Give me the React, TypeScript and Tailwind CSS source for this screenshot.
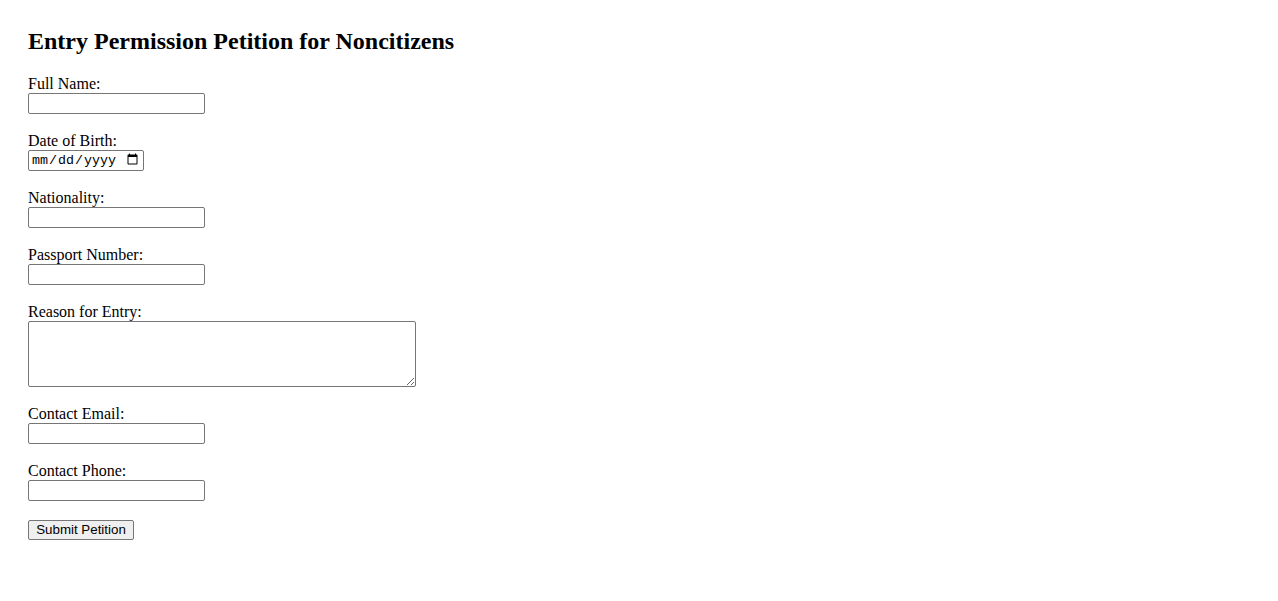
const FIELDS = [
  { id: 'fullName', label: 'Full Name:', type: 'text' },
  { id: 'dob', label: 'Date of Birth:', type: 'date' },
  { id: 'nationality', label: 'Nationality:', type: 'text' },
  { id: 'passport', label: 'Passport Number:', type: 'text' },
  { id: 'reason', label: 'Reason for Entry:', type: 'textarea' },
  { id: 'email', label: 'Contact Email:', type: 'email' },
  { id: 'phone', label: 'Contact Phone:', type: 'tel' },
] as const

const boxClass = 'block rounded-[2px] border border-[#767676] bg-white text-black'

export default function App() {
  return (
    <div className="min-h-screen bg-white px-[28px] pt-[28px] font-['Liberation_Serif',serif] text-black">
      <h2 className="mb-[19px] text-[24px] font-bold leading-[27.6px]">Entry Permission Petition for Noncitizens</h2>
      <form className="flex flex-col items-start" onSubmit={(event) => event.preventDefault()}>
        {FIELDS.map((field) => (
          <div key={field.id} className="mb-[18px] flex flex-col items-start">
            <label htmlFor={field.id} className="h-[18px] text-[16px] leading-[18px]">
              {field.label}
            </label>
            {field.type === 'textarea' ? (
              <textarea
                id={field.id}
                className={`${boxClass} h-[66px] w-[388px] px-[2px] py-[2px] font-['Liberation_Mono',monospace] text-[13.33px]`}
              />
            ) : field.type === 'date' ? (
              <input
                id={field.id}
                type="date"
                className={`${boxClass} h-[21px] w-[116px] px-[2px] font-['Liberation_Mono',monospace] text-[13.33px] leading-[15px]`}
              />
            ) : (
              <input
                id={field.id}
                type={field.type}
                className={`${boxClass} h-[21px] w-[177px] px-[2px] py-[1px] font-['Liberation_Sans',sans-serif] text-[13.33px]`}
              />
            )}
          </div>
        ))}
        <button
          type="submit"
          className="mt-px h-[20px] w-[106px] rounded-[2px] border border-[#767676] bg-[#efefef] px-[6px] font-['Liberation_Sans',sans-serif] text-[13.33px] leading-[16px] text-black"
        >
          Submit Petition
        </button>
      </form>
    </div>
  )
}
